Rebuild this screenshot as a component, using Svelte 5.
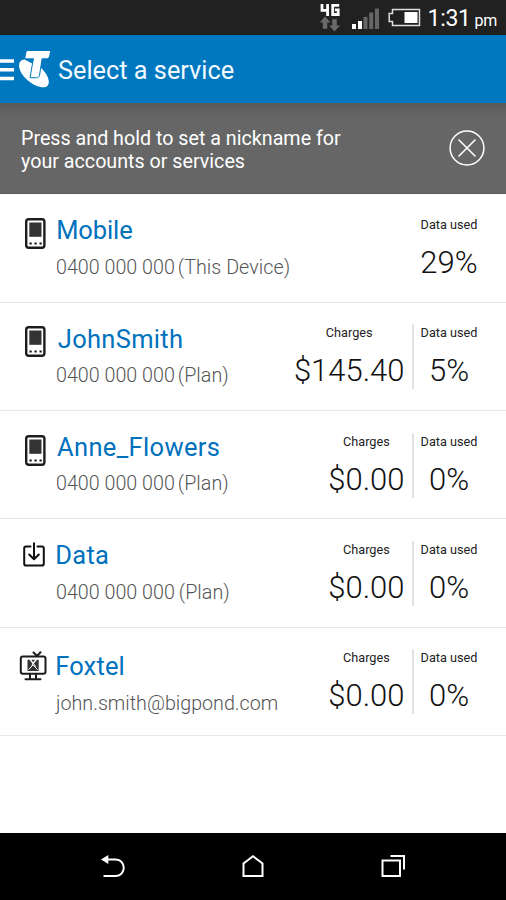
<script>
  const services = [
    { icon: 'phone', name: 'Mobile', number: '0400 000 000', note: '(This Device)', used: '29%', nx: 56.2, ls: -0.1 },
    { icon: 'phone', name: 'JohnSmith', number: '0400 000 000', note: '(Plan)', charges: '$145.40', used: '5%', nx: 57.8, ls: 0.3 },
    { icon: 'phone', name: 'Anne_Flowers', number: '0400 000 000', note: '(Plan)', charges: '$0.00', used: '0%', nx: 57, ls: 0.35 },
    { icon: 'data', name: 'Data', number: '0400 000 000', note: '(Plan)', charges: '$0.00', used: '0%', nx: 55.2, ls: 0.3 },
    { icon: 'tv', name: 'Foxtel', number: 'john.smith@bigpond.com', note: '', charges: '$0.00', used: '0%', nx: 55.2, ls: 0.15 }
  ];
</script>

<div class="screen">
  <div class="status">
    <svg class="indicators" width="109" height="35" viewBox="0 0 109 35">
      <g fill="none" stroke="#fff" stroke-width="2.800">
        <path d="M2 4v6.300h6.500M7.600 4v12" />
        <path d="M19.200 5.300h-6.500v9.200h5.500V9.800h-3.200" />
      </g>
      <path d="M5 16.500l5.500 6H7.300v6.300H2.800v-6.300H-.3zM14.500 31.500L9 25.500h3.200v-6.200h4.600v6.200H20z" fill="#6a6a6a" />
      <path d="M32 24h4v5h-4zM38 21h4v8h-4z" fill="#fff" />
      <path d="M43.500 17h4v12h-4zM49.200 12.500h4v16.500h-4zM55 8.500h4v20.500h-4z" fill="#666" />
      <path d="M72.500 9.500H99.500V25.500H72.500V21.500H69.200V13.500H72.500z" fill="none" stroke="#ddd" stroke-width="1.500" />
      <path d="M84.500 12h13v11h-13z" fill="#fff" />
    </svg>
    <div class="clock">1:31 <span>pm</span></div>
  </div>

  <div class="header">
    <svg width="52" height="67" viewBox="0 0 52 67">
      <path d="M0 26h14M0 34.700h14M0 43.500h14" stroke="#fff" stroke-width="3.500" />
      <path d="M24.500 24.500c-3.800 0-5.700 3-5.400 7 .7 8.500 12.500 19.500 22.400 20.700 5 .6 7.600-1.700 7.300-6-.4-4.700-3.500-9-7.300-13z" fill="#fff" />
      <path d="M33.600 22.500L30 42.700H36.500c1.800 0 2.600-.7 3-2.400L42.300 22.500z" fill="#fff" stroke="#0078bf" stroke-width="1" />
      <path d="M27.300 16H50.200l-.9 4.500c-.4 2-1.300 2.800-3.200 2.800H25.300l1-5.600q.3-1.500 1-1.700z" fill="#fff" />
    </svg>
    <h1>Select a service</h1>
  </div>

  <div class="notice">
    <p>Press and hold to set a nickname for<br />your accounts or services</p>
    <svg width="36" height="36" viewBox="0 0 36 36" fill="none" stroke="#fff">
      <circle cx="18" cy="18" r="16.900" stroke-width="1.500" />
      <path d="M10 10l16 16M26 10L10 26" stroke-width="1.600" stroke-linecap="round" />
    </svg>
  </div>

  <div class="list">
    {#each services as s}
      <div class="row">
        <div class="icon">
          {#if s.icon === 'phone'}
            <svg class="phone" width="21" height="31" viewBox="0 0 21 31">
              <rect x="1.200" y="1.200" width="18.200" height="28.600" rx="2.500" fill="#fff" stroke="#1c1c1c" stroke-width="2.400" />
              <path d="M4.300 4.500h12.200v14.300H4.300z" fill="#333" />
              <path d="M4.500 24.500h2.200v2H4.500zM9.500 24.500h2.200v2H9.500zM14.500 24.500h2.200v2h-2.200z" fill="#111" />
            </svg>
          {:else if s.icon === 'data'}
            <svg class="download" width="22" height="25" viewBox="0 0 22 25" fill="none" stroke="#111" stroke-width="2" stroke-linecap="round" stroke-linejoin="round">
              <path d="M7.500 4.500H3Q1.200 4.500 1.200 6.300V21.700Q1.200 23.500 3 23.500H19Q20.800 23.500 20.800 21.700V6.300Q20.800 4.500 19 4.500H14.500" />
              <path d="M11 1.200V17M6.200 12.500L11 17.200L15.800 12.500" />
            </svg>
          {:else}
            <svg class="television" width="28" height="30" viewBox="0 0 28 30" fill="none" stroke="#1c1c1c" stroke-width="2" stroke-linecap="round">
              <rect x="1.800" y="5.500" width="24.700" height="17.200" rx="2" />
              <path d="M14.500 1.500L18 5M21.500 1.200L18 5M11 23v4.500M17 23v4.500M6.500 28.200H21.500" />
              <path d="M8.500 8.700h2l3.500 4.800 4-4.800h1.700v11.300H8.500z" fill="#333" stroke="none" />
              <path d="M9.800 18.500L14 13.800L18.400 18.500M12 9l4.600 6.500M17 9l-4 5" stroke="#fff" stroke-width="1" />
              <path d="M12.300 8.700h3.700l-1.900 2.600z" fill="#333" stroke="none" />
            </svg>
          {/if}
        </div>
        <div class="info" class:lower={s.icon === 'tv'} class:spaced={s.icon === 'data'}>
          <div class="name" style="padding-left: {s.nx - 55}px; letter-spacing: {s.ls}px">{s.name}</div>
          <div class="detail">{s.number}<span class="note">{s.note}</span></div>
        </div>
        <div class="stats">
          {#if s.charges}
            <div class="charges">
              <div class="label">Charges</div>
              <div class="value">{s.charges}</div>
            </div>
          {/if}
          <div class="used">
            <div class="label">Data used</div>
            <div class="value">{s.used}</div>
          </div>
        </div>
      </div>
    {/each}
  </div>

  <div class="nav">
    <svg width="26" height="24" viewBox="0 0 26 24" fill="none" stroke="#fff" stroke-width="2">
      <path d="M7 5.500H15.500C26.500 5.500 26.500 22 15.500 22H3.500" />
      <path d="M1 5.500L8.300 1V10z" fill="#fff" stroke="none" />
    </svg>
    <svg width="26" height="24" viewBox="0 0 26 24" fill="none" stroke="#fff" stroke-width="2">
      <path d="M3.500 22V9.500L13 2.200L22.500 9.500V22z" />
    </svg>
    <svg width="26" height="24" viewBox="0 0 26 24" fill="none" stroke="#fff" stroke-width="2">
      <path d="M2.500 6.500H20V22H2.500zM10.500 2H24V15.500" />
    </svg>
  </div>
</div>

<style>
  .screen {
    width: 506px;
    height: 900px;
    display: flex;
    flex-direction: column;
    overflow: hidden;
    background: #fff;
    font-family: Roboto, "Liberation Sans", sans-serif;
  }
  svg { display: block; flex: none; }
  .status {
    height: 35px;
    flex: none;
    background: #212121;
    display: flex;
    color: #fff;
  }
  .indicators { margin-left: 320px; }
  .clock {
    margin-left: -1.500px;
    font-size: 23px;
    letter-spacing: -0.300px;
    line-height: 37px;
    white-space: nowrap;
    word-spacing: -1.500px;
  }
  .clock span { font-size: 16px; }
  .header {
    height: 68px;
    flex: none;
    background: #0078bf;
    display: flex;
  }
  h1 {
    margin: 0 0 0 6px;
    font-weight: 400;
    font-size: 25.300px;
    line-height: 71px;
    color: #f4faff;
  }
  .notice {
    height: 91px;
    box-sizing: border-box;
    flex: none;
    display: flex;
    justify-content: space-between;
    padding: 24px 21px 0 21px;
    background: linear-gradient(#595959, #666 14px);
    border-bottom: 1px solid #5a5a5a;
  }
  .notice p {
    margin: 0;
    color: #fff;
    font-size: 19.700px;
    line-height: 23.300px;
  }
  .notice svg { margin-top: 3px; }
  .list { flex: 1; padding-top: 0.700px; }
  .row {
    display: flex;
    height: 108.250px;
    box-sizing: border-box;
    border-bottom: 1px solid #e8e8e8;
  }
  .icon { width: 55px; flex: none; }
  .phone { margin: 23.500px 0 0 25px; }
  .download { margin: 22.300px 0 0 22.500px; }
  .television { margin: 23.300px 0 0 19px; }
  .info { flex: 1; padding-top: 19.700px; white-space: nowrap; }
  .lower { padding-top: 22.700px; }
  .name {
    font-size: 25.500px;
    line-height: 32px;
    color: #0071bd;
  }
  .detail {
    margin-top: 11.400px;
    padding-left: 1px;
    font-weight: 300;
    font-size: 19.700px;
    line-height: 20px;
    color: #555;
  }
  .note { margin-left: 3px; letter-spacing: 0.050px; }
  .spaced .note { margin-left: 4px; }
  .stats {
    display: flex;
    padding-top: 21.500px;
    height: 65px;
    color: #222;
    text-align: center;
  }
  .charges {
    padding-right: 7.500px;
    border-right: 2px solid #e2e2e2;
  }
  .label {
    font-size: 12.700px;
    line-height: 18px;
  }
  .value {
    margin-top: 9px;
    font-size: 31px;
    font-weight: 300;
    line-height: 40px;
    color: #111;
  }
  .used { width: 70px; padding-right: 22px; }
  .nav {
    height: 67px;
    flex: none;
    background: #000;
    display: flex;
    justify-content: space-between;
    padding: 0 100px;
    box-sizing: border-box;
  }
  .nav svg { margin-top: 21px; }
</style>
